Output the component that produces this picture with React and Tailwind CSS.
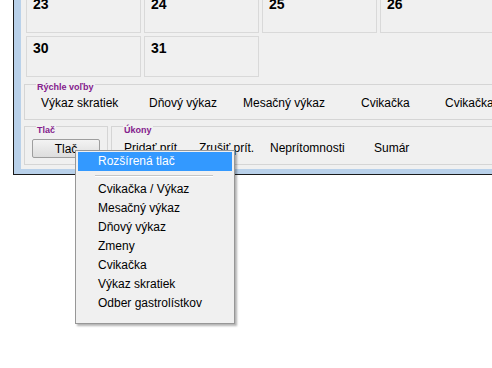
import React from "react";

const row1 = ["23", "24", "25", "26", "27"];
const row2 = ["30", "31"];

const quick = [
  { label: "Výkaz skratiek", w: "w-[108px]" },
  { label: "Dňový výkaz", w: "w-[94px]" },
  { label: "Mesačný výkaz", w: "w-[118px]" },
  { label: "Cvikačka", w: "w-[84px]" },
  { label: "Cvikačka", w: "w-[90px]" },
];

const actions = [
  { label: "Pridať prít.", w: "w-[75px]" },
  { label: "Zrušiť prít.", w: "w-[71px]" },
  { label: "Neprítomnosti", w: "w-[104px]" },
  { label: "Sumár", w: "w-[80px]" },
];

const menuItems = [
  "Cvikačka / Výkaz",
  "Mesačný výkaz",
  "Dňový výkaz",
  "Zmeny",
  "Cvikačka",
  "Výkaz skratiek",
  "Odber gastrolístkov",
];

function DayCell({ day }) {
  return (
    <div className="h-[41px] border border-[#d9d9d9] bg-[#f0f0f0]">
      <div className="pl-[6px] pt-[3px] text-[14px] leading-[16px] font-bold text-black">
        {day}
      </div>
    </div>
  );
}

function GroupLabel({ children, top }) {
  return (
    <span
      className={`absolute left-[11px] ${top} bg-[#f0f0f0] px-[1px] text-[9px] leading-[11px] font-bold text-[#84208c]`}
    >
      {children}
    </span>
  );
}

export default function App() {
  return (
    <div className="relative w-[492px] h-[368px] overflow-hidden bg-white font-['Liberation_Sans',Arial,sans-serif] text-[12px] text-black">
      {/* window */}
      <div className="ml-[13px] w-[520px] h-[175px] flex border-l border-b border-[#1a1a1a]">
        <div className="flex-1 flex flex-col overflow-hidden border-l-[7px] border-b-[5px] border-[#b9d1ea] bg-[#f0f0f0]">
          {/* calendar */}
          <div className="-mt-[8px] pl-[5px] grid grid-cols-[repeat(5,115px)] auto-rows-[41px] gap-[3px]">
            {row1.map((d) => (
              <DayCell key={d} day={d} />
            ))}
            {row2.map((d) => (
              <DayCell key={d} day={d} />
            ))}
          </div>

          {/* Rýchle voľby */}
          <div className="relative ml-[3px] mt-[7px] w-[500px] h-[36px] shrink-0 border border-[#d5d5d5]">
            <GroupLabel top="-top-[3px]">Rýchle voľby</GroupLabel>
            <div className="flex pl-[16px] pt-[11px] leading-[14px]">
              {quick.map((q, i) => (
                <span key={i} className={`${q.w} shrink-0 whitespace-nowrap`}>
                  {q.label}
                </span>
              ))}
            </div>
          </div>

          <div className="flex gap-[3px] ml-[3px] mt-[6px]">
            {/* Tlač */}
            <div className="relative w-[84px] h-[39px] shrink-0 border border-[#d5d5d5]">
              <GroupLabel top="-top-[2px]">Tlač</GroupLabel>
              <div className="ml-[7px] mt-[12px] w-[68px] h-[19px] flex items-center justify-center rounded-[2px] border border-[#9e9e9e] bg-gradient-to-b from-[#f3f3f3] to-[#dddddd] leading-[14px]">
                Tlač
              </div>
            </div>

            {/* Úkony */}
            <div className="relative w-[420px] h-[39px] shrink-0 border border-[#d5d5d5]">
              <GroupLabel top="-top-[2px]">Úkony</GroupLabel>
              <div className="flex pl-[12px] pt-[14px] leading-[14px]">
                {actions.map((a) => (
                  <span key={a.label} className={`${a.w} shrink-0 whitespace-nowrap`}>
                    {a.label}
                  </span>
                ))}
              </div>
            </div>
          </div>
        </div>
      </div>

      {/* context menu */}
      <div className="absolute left-[75px] top-[150px] w-[160px] h-[174px] border border-[#979797] bg-[#f0f0f0] shadow-[2px_2px_2px_rgba(0,0,0,0.3)] pt-[1px] px-[2px]">
        <div className="h-[19px] leading-[19px] pl-[20px] bg-[#3399ff] text-white whitespace-nowrap">
          Rozšírená tlač
        </div>
        <div className="h-[9px] flex items-center pl-[17px]">
          <div className="w-[118px] border-t border-b border-t-[#c6c6c6] border-b-white" />
        </div>
        {menuItems.map((m) => (
          <div key={m} className="h-[19px] leading-[19px] pl-[20px] whitespace-nowrap">
            {m}
          </div>
        ))}
      </div>
    </div>
  );
}
